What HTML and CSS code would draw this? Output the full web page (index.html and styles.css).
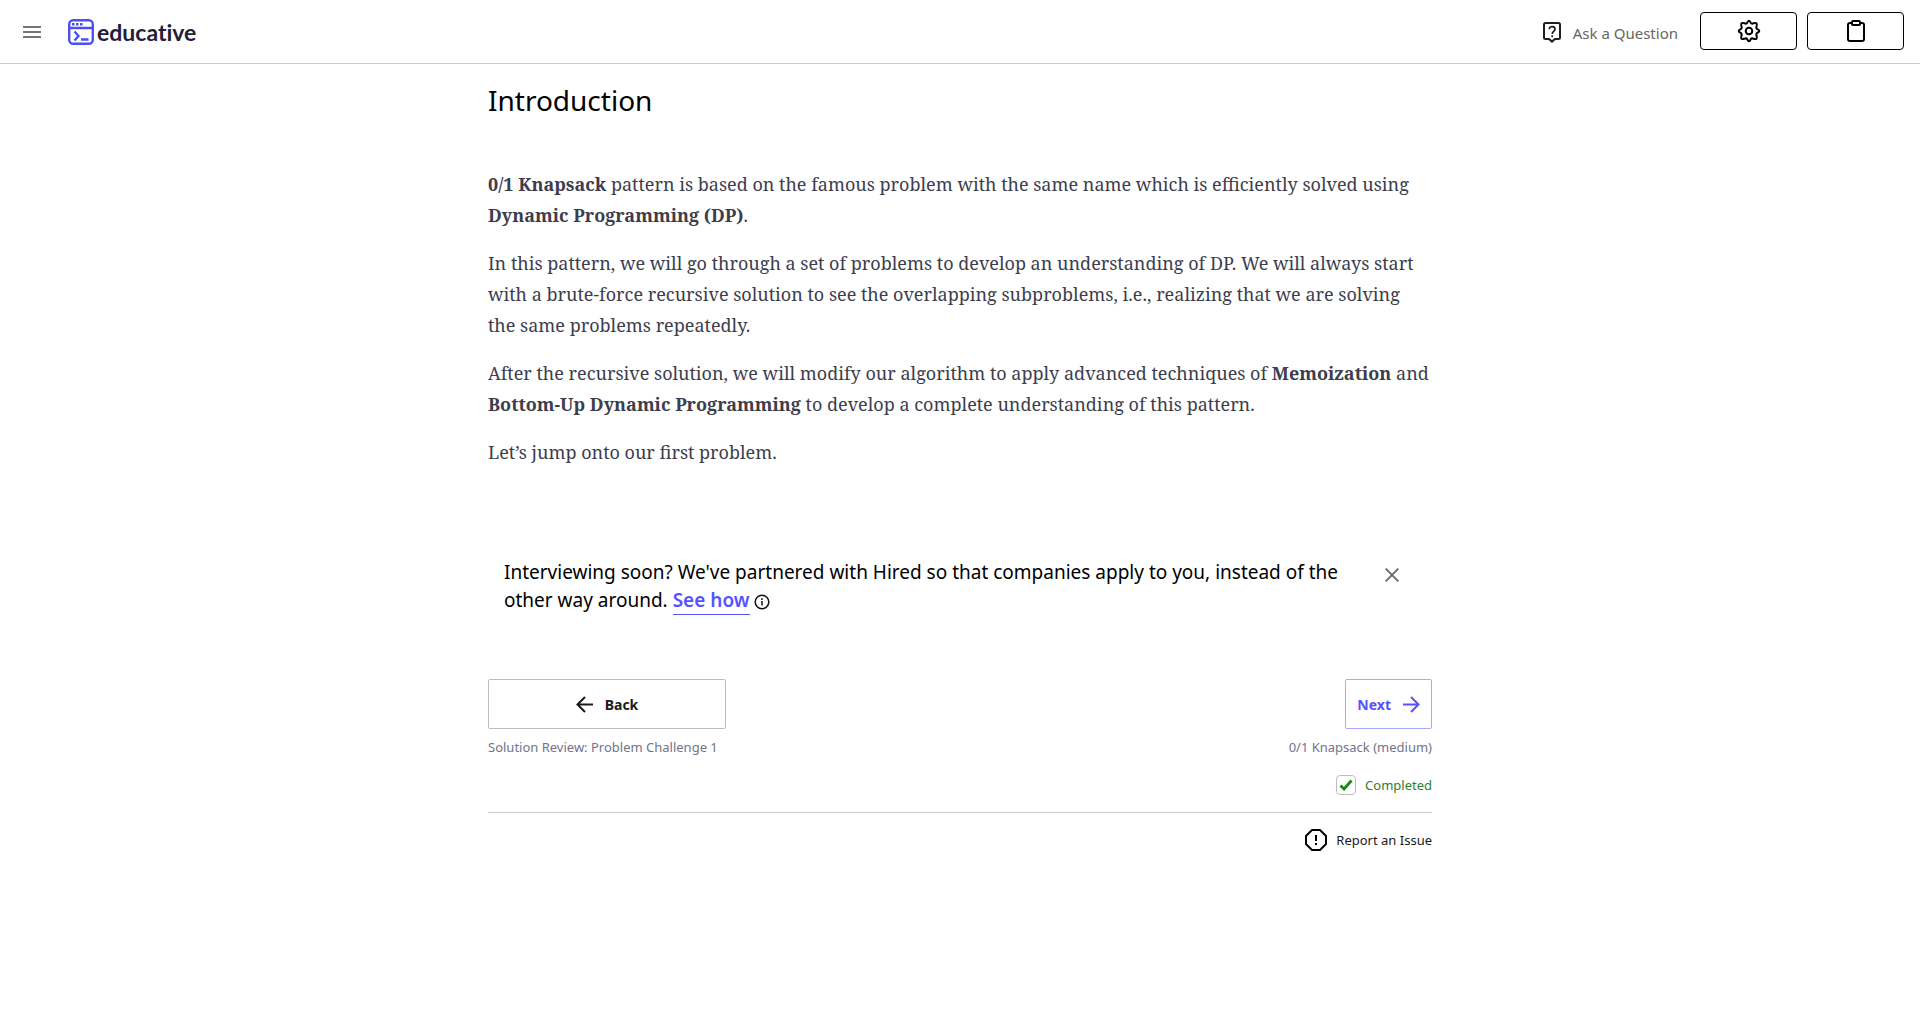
FILE: index.html
```html
<!DOCTYPE html>
<html lang="en">
<head>
  <meta charset="utf-8">
  <meta name="viewport" content="width=device-width, initial-scale=1">
  <title>Introduction - 0/1 Knapsack</title>
  <link rel="stylesheet" href="styles.css">
</head>
<body>
  <header class="topbar">
    <button class="icon-button" type="button" aria-label="Menu">
      <svg width="18" height="12" viewBox="0 0 18 12"><path d="M0 0h18v2H0zM0 5h18v2H0zM0 10h18v2H0z" fill="#757575"/></svg>
    </button>
    <a class="brand" href="#">
      <svg width="26" height="26" viewBox="0 0 26 26" fill="none" stroke="#4951f5" stroke-width="2.400">
        <rect x="1.200" y="1.200" width="23.600" height="23.600" rx="4"/>
        <path d="M1 9h24M6.500 12.500l4 4.500-4 4.500M13 20.500h7.500"/>
        <path d="M4 5.250h2.500M8 5.250h2.500M12 5.250h2.500"/>
      </svg>
      <span class="brand-name">educative</span>
    </a>
    <nav class="actions">
      <a class="ask" href="#">
        <svg width="18" height="21" viewBox="0 0 18 21" fill="none" stroke="#1f1f1f" stroke-width="2">
          <path d="M1 2.500Q1 1 2.500 1h13Q17 1 17 2.500v13q0 1.500-1.500 1.500H12l-3 2.600L6 17H2.500Q1 17 1 15.500z"/>
          <path d="M6.300 7.200C6.300 3.600 12 3.800 12 7.100 12 9.300 9.200 9.400 9.200 12M9.200 13.300v2" stroke-width="1.700"/>
        </svg>
        <span>Ask a Question</span>
      </a>
      <button class="tool-button" type="button" aria-label="Settings">
        <svg width="24" height="24" viewBox="0 0 24 24" fill="none" stroke="#000" stroke-width="2" stroke-linejoin="round">
          <circle cx="12" cy="12" r="3.300"/>
          <path d="M10.300 3.700Q12-.3 13.700 3.700Q14.600 5.200 16.700 4.200Q20.700 2.900 19.600 7.100Q18.800 9.400 20.300 10.200Q24.300 12 20.300 13.800Q18.800 14.600 19.600 16.900Q20.700 21.100 16.700 19.800Q14.600 18.800 13.700 20.300Q12 24.300 10.300 20.300Q9.400 18.800 7.300 19.800Q3.300 21.100 4.400 16.900Q5.200 14.600 3.700 13.800Q-.3 12 3.700 10.200Q5.200 9.400 4.400 7.100Q3.300 2.900 7.300 4.200Q9.400 5.200 10.300 3.700z"/>
        </svg>
      </button>
      <button class="tool-button" type="button" aria-label="Notes">
        <svg width="18" height="22" viewBox="0 0 18 22" fill="none" stroke="#000" stroke-width="2" stroke-linejoin="round">
          <path d="M5 3H3Q1 3 1 5v14q0 2 2 2h12q2 0 2-2V5q0-2-2-2h-2"/>
          <rect x="5" y="1" width="8" height="4" rx="1"/>
        </svg>
      </button>
    </nav>
  </header>

  <main class="lesson">
    <h1 class="title">Introduction</h1>
    <article class="prose">
      <p><strong>0/1 Knapsack</strong> pattern is based on the famous problem with the same name which is efficiently solved using <strong>Dynamic Programming (DP)</strong>.</p>
      <p>In this pattern, we will go through a set of problems to develop an understanding of DP. We will always start with a brute-force recursive solution to see the overlapping subproblems, i.e., realizing that we are solving the same problems repeatedly.</p>
      <p>After the recursive solution, we will modify our algorithm to apply advanced techniques of <strong>Memoization</strong> and <strong>Bottom-Up Dynamic Programming</strong> to develop a complete understanding of this pattern.</p>
      <p>Let’s jump onto our first problem.</p>
    </article>

    <aside class="promo">
      <p class="promo-text">Interviewing soon? We've partnered with Hired so that companies apply to you, instead of the other way around. <a class="promo-link" href="#">See how</a>
        <svg class="info" width="16" height="16" viewBox="0 0 16 16" fill="none" stroke="#111" stroke-width="1.500"><circle cx="8" cy="8" r="6.800"/><path d="M8 7v4.500M8 4.300v1.600"/></svg>
      </p>
      <button class="icon-button close" type="button" aria-label="Close">
        <svg width="14" height="14" viewBox="0 0 14 14"><path d="M.7.700l12.600 12.600M13.300.700L.7 13.300" stroke="#666" stroke-width="1.800"/></svg>
      </button>
    </aside>

    <nav class="pager">
      <div class="pager-side">
        <button class="pager-button back" type="button">
          <svg width="17" height="17" viewBox="0 0 17 17" fill="none" stroke="#1a1a1a" stroke-width="2"><path d="M17 8.500H1.500M9 1L1.500 8.500 9 16"/></svg>
          Back
        </button>
        <span class="caption">Solution Review: Problem Challenge 1</span>
      </div>
      <div class="pager-side end">
        <button class="pager-button next" type="button">
          Next
          <svg width="17" height="17" viewBox="0 0 17 17" fill="none" stroke="#5553ff" stroke-width="2"><path d="M0 8.500h15.500M8 1l7.500 7.500L8 16"/></svg>
        </button>
        <span class="caption">0/1 Knapsack (medium)</span>
      </div>
    </nav>

    <div class="status">
      <label class="completed">
        <span class="check">
          <input class="check-input" type="checkbox" checked>
          <svg class="check-mark" width="14" height="12" viewBox="0 0 14 12" fill="none"><path d="M1.500 6.500l3.500 3.500L12.500 1.500" stroke="#168a08" stroke-width="2.800"/></svg>
        </span>
        Completed
      </label>
    </div>

    <footer class="report-row">
      <a class="report" href="#">
        <svg width="22" height="22" viewBox="0 0 22 22" fill="none" stroke="#000" stroke-width="2"><path d="M7 1h8l6 6v8l-6 6H7l-6-6V7z" stroke-linejoin="round"/><path d="M11 6v6M11 14v2"/></svg>
        <span>Report an Issue</span>
      </a>
    </footer>
  </main>
</body>
</html>
```
FILE: styles.css
```css
*,
*::before,
*::after {
  box-sizing: border-box;
}

body {
  margin: 0;
  background: #fff;
  color: #000;
  font-family: "Noto Sans", "Open Sans", sans-serif;
}

svg {
  display: block;
  flex: none;
}

a {
  color: inherit;
  text-decoration: none;
}

button {
  font: inherit;
  background: #fff;
  cursor: pointer;
}

.icon-button {
  display: flex;
  padding: 0;
  border: 0;
}

/* Top bar */
.topbar {
  display: flex;
  align-items: center;
  height: 64px;
  padding: 0 16px 0 23px;
  border-bottom: 1px solid #ccc;
}

.brand {
  display: flex;
  align-items: center;
  gap: 3px;
  margin-left: 27px;
}

.brand-name {
  color: #1f2038;
  font: 700 23px/26px Lato, sans-serif;
  font-variant-ligatures: none;
}

.actions {
  display: flex;
  align-items: center;
  gap: 10px;
  margin-left: auto;
  padding-bottom: 2px;
}

.ask {
  display: flex;
  align-items: center;
  gap: 12px;
  margin-right: 12px;
  padding-top: 4px;
  color: #666;
  font-size: 15px;
  line-height: 20px;
}

.tool-button {
  display: flex;
  align-items: center;
  justify-content: center;
  width: 97px;
  height: 38px;
  padding: 0;
  border: 1px solid #000;
  border-radius: 4px;
}

/* Lesson */
.lesson {
  max-width: 976px;
  margin: 0 auto;
  padding: 16px;
}

.title {
  margin: 0 0 49px;
  font-size: 28px;
  line-height: 40px;
  font-weight: 400;
}

.prose {
  padding-right: 2px;
  color: #3d3d4e;
  font: 18px/31px "Noto Serif", "Liberation Serif", serif;
}

.prose p {
  margin: 0 0 17px;
}

.promo {
  display: flex;
  align-items: flex-start;
  justify-content: space-between;
  gap: 32px;
  margin-top: 90px;
  padding: 0 33px 0 16px;
}

.promo-text {
  max-width: 848px;
  margin: 0;
  font-size: 19px;
  line-height: 28px;
}

.promo-link {
  display: inline-block;
  border-bottom: 1px solid #5553ff;
  color: #5553ff;
  font-weight: 600;
}

.info {
  display: inline-block;
  vertical-align: -3px;
}

.close {
  margin-top: 10px;
}

.pager {
  display: flex;
  justify-content: space-between;
  margin-top: 64px;
}

.pager-side {
  display: flex;
  flex-direction: column;
  gap: 8px;
}

.end {
  align-items: flex-end;
}

.pager-button {
  display: flex;
  align-items: center;
  justify-content: center;
  gap: 12px;
  height: 50px;
  padding: 0 11px;
  border: 1px solid #bdbdbd;
  border-radius: 2px;
  font-size: 14px;
  font-weight: 700;
}

.back {
  min-width: 238px;
  color: #1a1a1a;
}

.next {
  border-color: #a9a8ff;
  color: #5553ff;
}

.caption {
  color: #73738a;
  font-size: 13px;
  line-height: 20px;
}

.status {
  display: flex;
  justify-content: flex-end;
  padding: 18px 0 17px;
  border-bottom: 1px solid #ccc;
}

.completed {
  display: flex;
  align-items: center;
  gap: 9px;
  color: #2e7d32;
  font-size: 13px;
  line-height: 20px;
}

.check {
  display: grid;
  place-items: center;
}

.check-input,
.check-mark {
  grid-area: 1 / 1;
}

.check-input {
  appearance: none;
  width: 20px;
  height: 20px;
  margin: 0;
  border: 1px solid #bbb;
  border-radius: 4px;
}

.check-mark {
  pointer-events: none;
}

.report-row {
  display: flex;
  justify-content: flex-end;
  padding-top: 16px;
}

.report {
  display: flex;
  align-items: center;
  gap: 9px;
  color: #1a1a1a;
  font-size: 13px;
  line-height: 20px;
}
```
